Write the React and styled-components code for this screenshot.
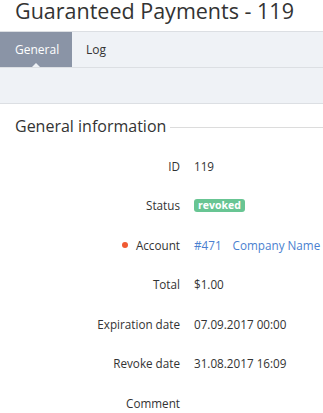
// Guaranteed payment details page: title, tabs, toolbar strip and a field list

import styled, { createGlobalStyle } from "styled-components";

const GlobalStyle = createGlobalStyle`
    body {
        margin: 0;
        background: #fff;
        font-family: "Open Sans", "Noto Sans", sans-serif;
        color: #333;
    }
`;

const fields = [
    { label: "ID", value: "119" },
    { label: "Status", badge: "revoked" },
    { label: "Account", required: true, links: ["#471", "Company Name"] },
    { label: "Total", value: "$1.00" },
    { label: "Expiration date", value: "07.09.2017 00:00" },
    { label: "Revoke date", value: "31.08.2017 16:09" },
    { label: "Comment", value: "" },
];

export default function App() {
    return (
        <Page>
            <GlobalStyle />
            <Title>Guaranteed Payments - 119</Title>
            <TabBar>
                <Tab $active>General</Tab>
                <Tab>Log</Tab>
            </TabBar>
            <Toolbar />
            <Section>
                <SectionHeader>
                    <SectionTitle>General information</SectionTitle>
                    <SectionRule />
                </SectionHeader>
                <FieldList>
                    {fields.map((f) => (
                        <FieldRow key={f.label}>
                            <Label>
                                {f.required && <RequiredDot />}
                                {f.label}
                            </Label>
                            <Value>
                                {f.badge && <Badge>{f.badge}</Badge>}
                                {f.links && f.links.map((l) => <Link key={l}>{l}</Link>)}
                                {f.value}
                            </Value>
                        </FieldRow>
                    ))}
                </FieldList>
            </Section>
        </Page>
    );
}

const Page = styled.div`
    width: 323px;
    height: 413px;
    overflow: hidden;
`;

const Title = styled.h1`
    margin: 0;
    padding: 0 0 0 15px;
    height: 31px;
    font-size: 21.5px;
    font-weight: 400;
    line-height: 21px;
    color: #333;
    white-space: nowrap;
`;

const TabBar = styled.div`
    display: flex;
    height: 35px;
    background: #eff2f6;
    border-top: 1px solid #dcdfe3;
    border-bottom: 1px solid #dcdfe3;
`;

const Tab = styled.div`
    position: relative;
    display: flex;
    align-items: center;
    padding: 0 14px 0 ${(p) => (p.$active ? "15px" : "14px")};
    width: ${(p) => (p.$active ? "72px" : "auto")};
    box-sizing: border-box;
    font-size: 12px;
    color: ${(p) => (p.$active ? "#fff" : "#333")};
    background: ${(p) => (p.$active ? "#8a94a6" : "transparent")};

    &::after {
        content: "";
        display: ${(p) => (p.$active ? "block" : "none")};
        position: absolute;
        left: 50%;
        bottom: 0;
        margin-left: -4px;
        border: 4px solid transparent;
        border-bottom-color: #eff2f6;
        border-top-width: 0;
    }
`;

const Toolbar = styled.div`
    height: 35px;
    background: #eff2f6;
    border-bottom: 1px solid #dcdfe3;
`;

const Section = styled.div`
    padding: 11px 0 0 15px;
`;

const SectionHeader = styled.div`
    display: flex;
    align-items: center;
    gap: 4px;
`;

const SectionTitle = styled.div`
    font-size: 16px;
    line-height: 22px;
    color: #333;
    white-space: nowrap;
`;

const SectionRule = styled.div`
    flex: 1;
    height: 1px;
    margin-top: 2px;
    background: #dcdcdc;
`;

const FieldList = styled.div`
    display: flex;
    flex-direction: column;
    padding-top: 19px;
`;

const FieldRow = styled.div`
    display: grid;
    grid-template-columns: 180px auto;
    column-gap: 14px;
    align-items: center;
    height: 39.5px;
    margin-left: -15px;
    font-size: 11.7px;
    white-space: nowrap;
`;

const Label = styled.div`
    display: flex;
    justify-content: flex-end;
    align-items: center;
    color: #333;
    margin-top: -20px;
`;

const Value = styled.div`
    display: flex;
    align-items: center;
    gap: 11px;
    color: #333;
    margin-top: -20px;
`;

const RequiredDot = styled.span`
    width: 6px;
    height: 6px;
    border-radius: 50%;
    background: #f05a32;
    margin-right: 8px;
`;

const Badge = styled.span`
    background: #68c593;
    color: #fff;
    font-weight: 700;
    font-size: 10.5px;
    line-height: 13px;
    padding: 0 4px;
    border-radius: 3px;
`;

const Link = styled.span`
    color: #4a7fd0;
`;
